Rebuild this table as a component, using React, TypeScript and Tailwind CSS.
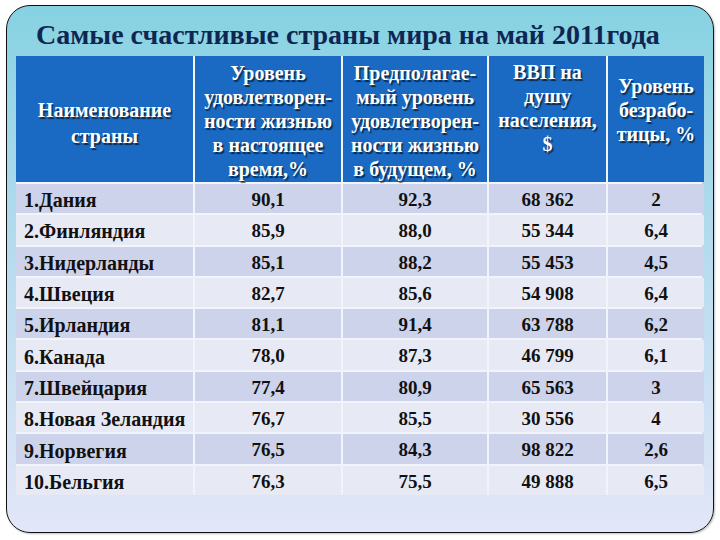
const rows: [string, string, string, string, string][] = [
  ['1.Дания', '90,1', '92,3', '68 362', '2'],
  ['2.Финляндия', '85,9', '88,0', '55 344', '6,4'],
  ['3.Нидерланды', '85,1', '88,2', '55 453', '4,5'],
  ['4.Швеция', '82,7', '85,6', '54 908', '6,4'],
  ['5.Ирландия', '81,1', '91,4', '63 788', '6,2'],
  ['6.Канада', '78,0', '87,3', '46 799', '6,1'],
  ['7.Швейцария', '77,4', '80,9', '65 563', '3'],
  ['8.Новая Зеландия', '76,7', '85,5', '30 556', '4'],
  ['9.Норвегия', '76,5', '84,3', '98 822', '2,6'],
  ['10.Бельгия', '76,3', '75,5', '49 888', '6,5'],
];

const headCell =
  'bg-[#1a6ac3] text-white text-center text-[20px] leading-[24px] font-bold [text-shadow:1.5px_1.5px_1px_rgba(0,0,0,0.6)]';

export default function App() {
  return (
    <div className="w-[720px] h-[540px] bg-white pt-[5px] pl-[6px] font-['Liberation_Serif',serif]">
      <div className="w-[708px] h-[528px] rounded-[24px] border-[1.5px] border-[#111] bg-gradient-to-b from-[#86d2e2] via-[#b9dcef] to-[#e2e6f8] shadow-[1px_1px_2px_rgba(0,0,0,0.25)]">
        {/* Title */}
        <h1 className="pt-[12px] pl-[29px] h-[50px] text-[28px] leading-[34px] font-bold text-[#0e2752] whitespace-nowrap">
          Самые счастливые страны мира на май 2011года
        </h1>

        {/* Table */}
        <div className="ml-[9px] w-[686px] grid grid-cols-[177px_146px_144px_117px_96px] grid-rows-[126px_repeat(10,29.3px)] gap-[2px] bg-[#f2f4fb]">
          <div className={`${headCell} pt-[41px] leading-[26px]`}>
            Наименование
            <br />
            страны
          </div>
          <div className={`${headCell} pt-[5px]`}>
            Уровень
            <br />
            удовлетворен-
            <br />
            ности жизнью
            <br />в настоящее
            <br />
            время,%
          </div>
          <div className={`${headCell} pt-[5px]`}>
            Предполагае-
            <br />
            мый уровень
            <br />
            удовлетворен-
            <br />
            ности жизнью
            <br />в будущем, %
          </div>
          <div className={`${headCell} pt-[4px]`}>
            ВВП на
            <br />
            душу
            <br />
            населения,
            <br />$
          </div>
          <div className={`${headCell} pt-[18px]`}>
            Уровень
            <br />
            безрабо-
            <br />
            тицы, %
          </div>

          {rows.map((r, i) => {
            const bg = i % 2 === 0 ? 'bg-[#cdd3ea]' : 'bg-[#e7eaf5]';
            return r.map((v, j) => (
              <div
                key={`${i}-${j}`}
                className={`${bg} flex items-center pt-[3px] font-bold text-[#111] whitespace-nowrap ${
                  j === 0 ? 'pl-[8px] text-[20px]' : 'justify-center text-[19px]'
                }`}
              >
                {v}
              </div>
            ));
          })}
        </div>
      </div>
    </div>
  );
}
